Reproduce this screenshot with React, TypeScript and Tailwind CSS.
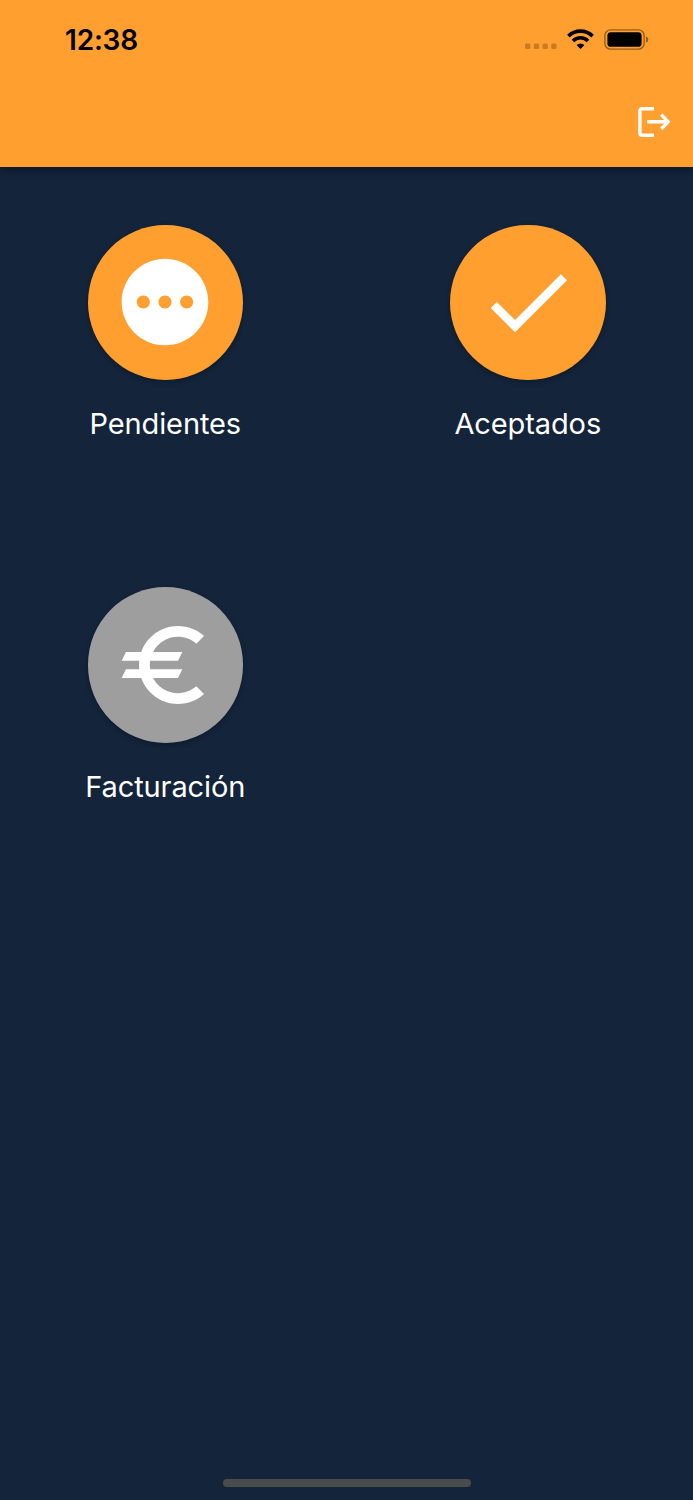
import React from 'react';

const CHECK_PATH = 'M9 16.17L4.83 12l-1.42 1.41L9 19 21 7l-1.41-1.41z';
const PENDING_PATH =
  'M12 2C6.48 2 2 6.48 2 12s4.48 10 10 10 10-4.48 10-10S17.52 2 12 2zM7 13.5c-.83 0-1.5-.67-1.5-1.5s.67-1.5 1.5-1.5 1.5.67 1.5 1.5-.67 1.5-1.5 1.5zm5 0c-.83 0-1.5-.67-1.5-1.5s.67-1.5 1.5-1.5 1.5.67 1.5 1.5-.67 1.5-1.5 1.5zm5 0c-.83 0-1.5-.67-1.5-1.5s.67-1.5 1.5-1.5 1.5.67 1.5 1.5-.67 1.5-1.5 1.5z';
const EURO_PATH =
  'M15 18.5c-2.51 0-4.68-1.42-5.76-3.5H15l1-2H8.58c-.05-.33-.08-.66-.08-1s.03-.67.08-1H15l1-2H9.24C10.32 6.92 12.5 5.5 15 5.5c1.61 0 3.09.59 4.23 1.57L21 5.3C19.41 3.87 17.3 3 15 3c-3.92 0-7.24 2.51-8.48 6H3l-1 2h4.06c-.04.33-.06.66-.06 1s.02.67.06 1H3l-1 2h4.52c1.24 3.49 4.56 6 8.48 6 2.31 0 4.41-.87 6-2.3l-1.78-1.77c-1.13.98-2.6 1.57-4.22 1.57z';

interface MenuItem {
  label: string;
  icon: string;
  enabled: boolean;
}

const MENU: MenuItem[] = [
  { label: 'Pendientes', icon: PENDING_PATH, enabled: true },
  { label: 'Aceptados', icon: CHECK_PATH, enabled: true },
  { label: 'Facturación', icon: EURO_PATH, enabled: false },
];

const StatusBar = () => (
  <div className="flex h-[78px] items-center justify-between pl-[65px] pr-[44px]">
    <span className="pt-0.5 text-[28px] leading-none font-semibold tracking-[-0.2px] text-black">12:38</span>
    <div className="flex items-center gap-2.5">
      <svg className="h-5 w-8" viewBox="0 0 32 20" fillOpacity="0.22">
        <rect x="0" y="14.6" width="5.4" height="5.4" rx="1.5" />
        <rect x="8.8" y="14.6" width="5.4" height="5.4" rx="1.5" />
        <rect x="17.5" y="14.6" width="5.4" height="5.4" rx="1.5" />
        <rect x="26.2" y="14.6" width="5.4" height="5.4" rx="1.5" />
      </svg>
      <svg className="h-5 w-[27px]" viewBox="0 0 27 20">
        <path d="M1.4 7.1a17.2 17.2 0 0 1 24.2 0" fill="none" stroke="#000" strokeWidth="3.6" />
        <path d="M6 11.9a10.6 10.6 0 0 1 15 0" fill="none" stroke="#000" strokeWidth="3.6" />
        <path d="M13.5 20l-3.9-4a5.6 5.6 0 0 1 7.8 0z" />
      </svg>
      <svg className="h-[21px] w-[45px]" viewBox="0 0 45 21">
        <rect x="0.9" y="0.9" width="39.2" height="19.2" rx="5.6" fill="none" stroke="#000" strokeOpacity="0.42" strokeWidth="1.4" />
        <rect x="3.4" y="3.2" width="34.2" height="14.6" rx="3.4" />
        <path d="M42 7.4c3 1 3 5.2 0 6.2z" fillOpacity="0.42" />
      </svg>
    </div>
  </div>
);

const MenuTile = ({ label, icon, enabled }: MenuItem) => (
  <div className="flex aspect-square flex-col items-center pt-[57.5px]">
    <button
      className={`flex size-[155.5px] shrink-0 items-center justify-center rounded-full shadow-[0_2px_5px_rgba(0,0,0,0.28)] ${
        enabled ? 'bg-[#ff9f2f]' : 'bg-[#9e9e9e]'
      }`}
    >
      <svg className="size-[104px] fill-white" viewBox="0 0 24 24">
        <path d={icon} />
      </svg>
    </button>
    <span className="mt-[26px] text-[29px] leading-9 tracking-[-0.1px] text-white">{label}</span>
  </div>
);

export default function App() {
  return (
    <div className="flex h-[1500px] w-full flex-col bg-[#13243b] font-['Inter',sans-serif]">
      <header className="z-10 h-[167px] shrink-0 bg-[#ff9f2f] shadow-[0_3px_8px_rgba(0,0,0,0.4)]">
        <StatusBar />
        <div className="flex h-[88px] items-center justify-end pr-[22px]">
          <button aria-label="Salir">
            <svg className="h-[30px] w-[34px]" viewBox="0 0 34 30" fill="none" stroke="#fff" strokeWidth="3.4">
              <path d="M17 1.7H4.9a2 2 0 0 0-2 2v22.6a2 2 0 0 0 2 2H17" />
              <path d="M10.3 14.8H31M24.3 7.6l6.8 7.2-6.8 7.2" />
            </svg>
          </button>
        </div>
      </header>

      <main className="grid grid-cols-2 gap-8">
        {MENU.map((item) => (
          <MenuTile key={item.label} {...item} />
        ))}
      </main>

      <div className="mt-auto mb-[13.5px] h-2 w-[248px] self-center rounded-full bg-[#4b4b4b]" />
    </div>
  );
}
